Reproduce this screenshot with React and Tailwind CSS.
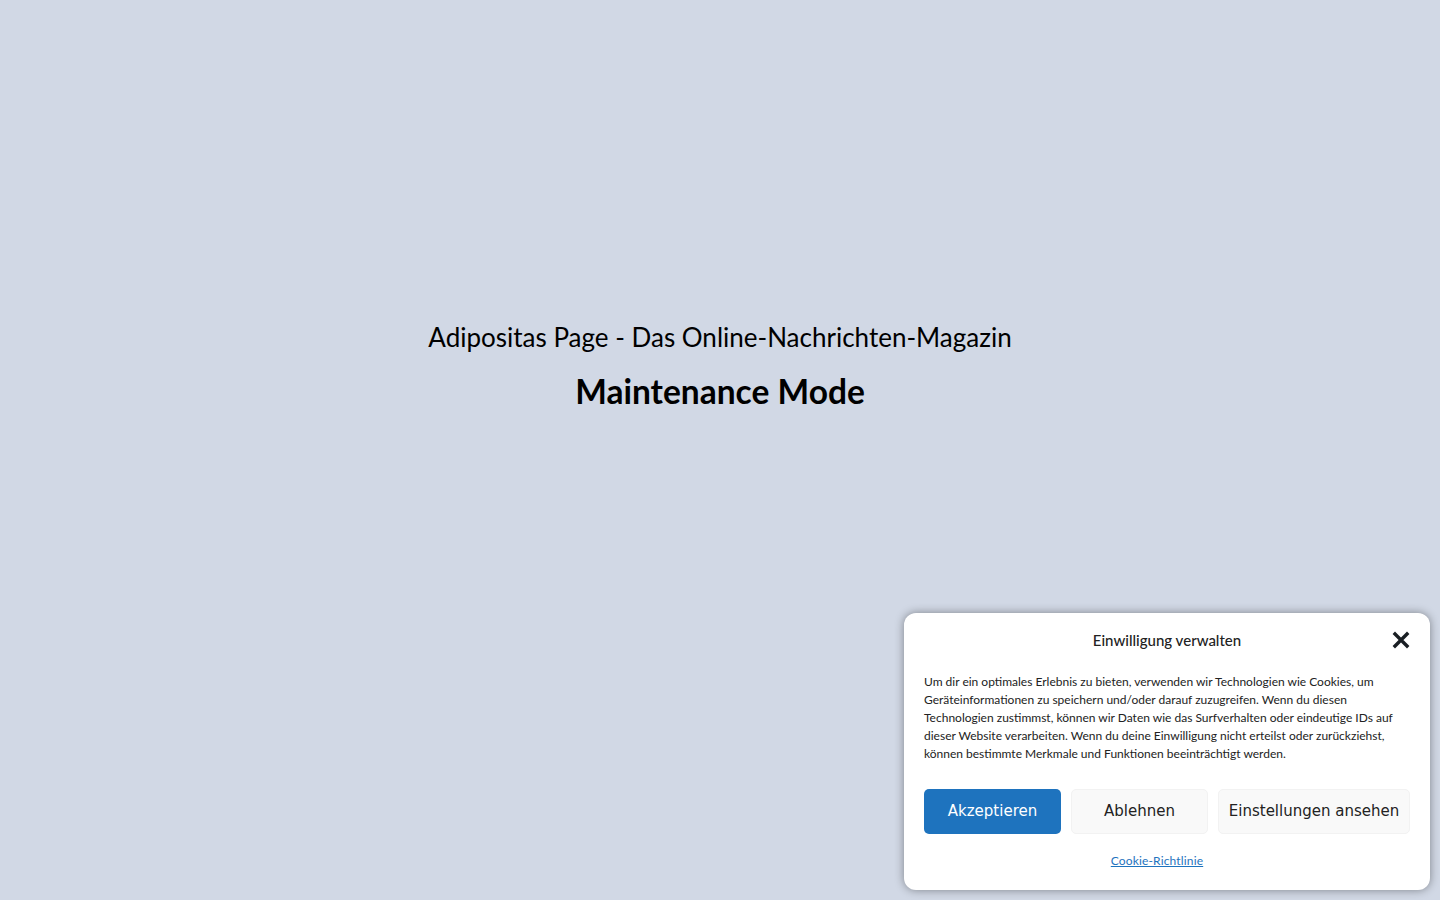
export default function App() {
  const body =
    'Um dir ein optimales Erlebnis zu bieten, verwenden wir Technologien wie Cookies, um Geräteinformationen zu speichern und/oder darauf zuzugreifen. Wenn du diesen Technologien zustimmst, können wir Daten wie das Surfverhalten oder eindeutige IDs auf dieser Website verarbeiten. Wenn du deine Einwilligung nicht erteilst oder zurückziehst, können bestimmte Merkmale und Funktionen beeinträchtigt werden.'

  return (
    <main className="relative h-[900px] w-full overflow-hidden bg-[#d1d8e5] font-['Lato',sans-serif] text-black">
      <div className="flex flex-col items-center pt-[319px]">
        <p className="text-[26px] leading-[36px]">Adipositas Page - Das Online-Nachrichten-Magazin</p>
        <h1 className="mt-[16px] text-[33.5px] font-bold leading-[40px]">Maintenance Mode</h1>
      </div>

      <div className="absolute left-[904px] top-[613px] w-[526px] rounded-xl bg-white px-5 pb-[20px] pt-[17px] shadow-[0_0_10px_rgba(0,0,0,0.4)]">
        <div className="relative flex h-[20px] items-center justify-center">
          <h2 className="text-[15px] font-medium text-[#222]">Einwilligung verwalten</h2>
          <button className="absolute right-0 top-[1px] text-[#191e23]">
            <svg width="18" height="18" viewBox="0 0 18 18">
              <path d="M3 3 L15 15 M15 3 L3 15" stroke="currentColor" strokeWidth="3.4" strokeLinecap="square" />
            </svg>
          </button>
        </div>

        <p className="mt-[23px] text-[12px] leading-[18px] text-[#222]">{body}</p>

        <div className="mt-[26px] flex gap-[10px] font-['DejaVu_Sans',sans-serif] text-[15px]">
          <button className="h-[45px] w-[137px] rounded-[5px] bg-[#1e73be] text-white">Akzeptieren</button>
          <button className="h-[45px] w-[137px] rounded-[5px] border border-[#f2f2f2] bg-[#f9f9f9] text-[#222]">Ablehnen</button>
          <button className="h-[45px] w-[192px] rounded-[5px] border border-[#f2f2f2] bg-[#f9f9f9] text-[#222]">Einstellungen ansehen</button>
        </div>

        <div className="mt-[18px] flex justify-center pr-[20px]">
          <a className="text-[12px] tracking-[0.15px] text-[#1e73be] underline" href="#">Cookie-Richtlinie</a>
        </div>
      </div>
    </main>
  )
}
